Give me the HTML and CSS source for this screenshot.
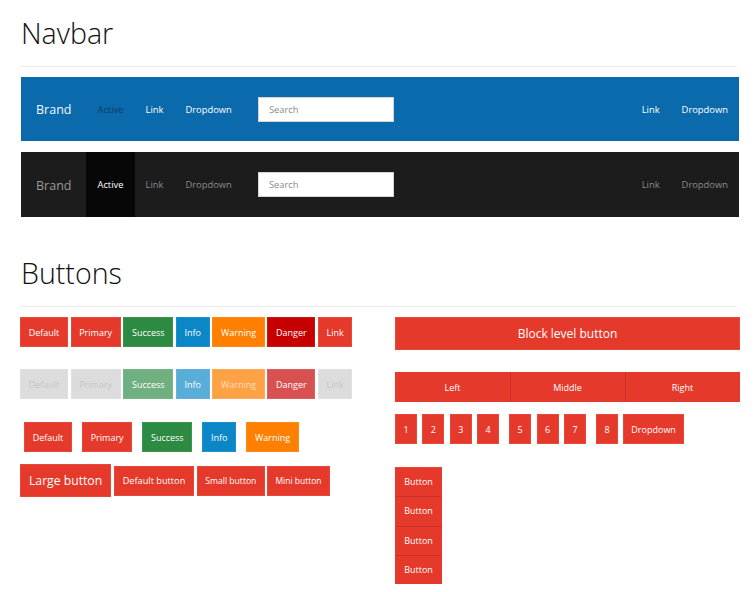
FILE: index.html
```html
<!DOCTYPE html>
<html>
<head>
<meta charset="utf-8">
<link rel="stylesheet" href="styles.css">
</head>
<body>
<div class="page">
  <h1 class="title title-first">Navbar</h1>
  <div class="rule"></div>

  <nav class="navbar navbar-blue">
    <span class="brand">Brand</span>
    <ul class="nav">
      <li class="active">Active</li>
      <li>Link</li>
      <li>Dropdown</li>
    </ul>
    <div class="search"><span>Search</span></div>
    <ul class="nav nav-right">
      <li>Link</li>
      <li>Dropdown</li>
    </ul>
  </nav>

  <nav class="navbar navbar-dark">
    <span class="brand">Brand</span>
    <ul class="nav">
      <li class="active">Active</li>
      <li>Link</li>
      <li>Dropdown</li>
    </ul>
    <div class="search"><span>Search</span></div>
    <ul class="nav nav-right">
      <li>Link</li>
      <li>Dropdown</li>
    </ul>
  </nav>

  <h1 class="title title-second">Buttons</h1>
  <div class="rule"></div>

  <div class="cols">
    <div class="col">
      <div class="row row-tight">
        <span class="btn">Default</span>
        <span class="btn">Primary</span>
        <span class="btn btn-success">Success</span>
        <span class="btn btn-info">Info</span>
        <span class="btn btn-warning">Warning</span>
        <span class="btn btn-danger">Danger</span>
        <span class="btn">Link</span>
      </div>
      <div class="row row-tight row-disabled">
        <span class="btn btn-gray">Default</span>
        <span class="btn btn-gray">Primary</span>
        <span class="btn btn-success is-faded">Success</span>
        <span class="btn btn-info is-faded">Info</span>
        <span class="btn btn-warning is-faded">Warning</span>
        <span class="btn btn-danger is-faded">Danger</span>
        <span class="btn btn-gray">Link</span>
      </div>
      <div class="row row-wide">
        <span class="btn">Default</span>
        <span class="btn">Primary</span>
        <span class="btn btn-success">Success</span>
        <span class="btn btn-info">Info</span>
        <span class="btn btn-warning">Warning</span>
      </div>
      <div class="row row-sizes">
        <span class="btn btn-large">Large button</span>
        <span class="btn btn-default-size">Default button</span>
        <span class="btn btn-small">Small button</span>
        <span class="btn btn-mini">Mini button</span>
      </div>
    </div>

    <div class="col">
      <div class="btn btn-block">Block level button</div>
      <div class="group">
        <span class="btn">Left</span>
        <span class="btn">Middle</span>
        <span class="btn">Right</span>
      </div>
      <div class="toolbar">
        <div class="tgroup">
          <span class="btn btn-num">1</span>
          <span class="btn btn-num">2</span>
          <span class="btn btn-num">3</span>
          <span class="btn btn-num">4</span>
        </div>
        <div class="tgroup">
          <span class="btn btn-num">5</span>
          <span class="btn btn-num">6</span>
          <span class="btn btn-num">7</span>
        </div>
        <div class="tgroup">
          <span class="btn btn-num">8</span>
          <span class="btn btn-drop">Dropdown</span>
        </div>
      </div>
      <div class="vgroup">
        <span class="btn">Button</span>
        <span class="btn">Button</span>
        <span class="btn">Button</span>
        <span class="btn">Button</span>
      </div>
    </div>
  </div>
</div>
</body>
</html>
```

FILE: styles.css
```css
* { box-sizing: border-box; }

html, body {
  margin: 0;
  padding: 0;
  background: #ffffff;
}

body {
  font-family: "Open Sans", "Noto Sans", sans-serif;
  color: #222;
}

.page {
  width: 756px;
  padding: 0 16px 0 20px;
}

.title {
  margin: 0;
  font-size: 28.6px;
  font-weight: 300;
  line-height: 32px;
  color: #111;
  padding-left: 1px;
}

.title-first { padding-top: 17px; }
.title-second { padding-top: 14px; margin-top: 26px; }

.rule {
  height: 1px;
  background: #ececec;
  margin: 17px 3px 0 0;
}

/* Navbar */
.navbar {
  display: flex;
  align-items: center;
  margin-left: 1px;
  margin-top: 10px;
  height: 64px;
  padding-left: 15px;
  width: 718px;
}

.navbar + .navbar { margin-top: 11px; height: 65px; }

.navbar-blue { background: #0a6aab; margin-top: 10px; }
.navbar-dark { background: #1c1c1c; }

.brand {
  font-size: 12.5px;
  padding-right: 15px;
  padding-top: 2px;
  line-height: 62px;
}

.navbar-blue .brand { color: #f4f8fb; }
.navbar-dark .brand { color: #9a9a9a; }

.nav {
  display: flex;
  list-style: none;
  margin: 0;
  padding: 0;
  align-self: stretch;
}

.nav li {
  display: flex;
  align-items: center;
  padding: 0 11px;
  font-size: 9.4px;
}

.navbar-blue .nav li { color: #ffffff; }
.navbar-blue .nav li.active { color: #0b3a5f; }
.navbar-dark .nav li { color: #8a8a8a; }
.navbar-dark .nav li.active { color: #ffffff; background: #070707; }

.search {
  margin-left: 15px;
  width: 136px;
  height: 25px;
  background: #fff;
  border: 1px solid #d6d6d6;
  display: flex;
  align-items: center;
  padding-left: 10px;
  font-size: 9.4px;
  color: #8c8c8c;
}

.nav-right { margin-left: auto; }

/* Columns */
.cols {
  display: grid;
  grid-template-columns: 345px 345px;
  column-gap: 30px;
  margin-top: 10px;
}

.col { display: flex; flex-direction: column; align-items: flex-start; }

/* Buttons */
.btn {
  display: inline-flex;
  align-items: center;
  justify-content: center;
  height: 30px;
  padding: 0 7.7px;
  background: #e53a2b;
  color: #fff;
  font-size: 9px;
  white-space: nowrap;
  border: 1px solid #e8483a;
}

.btn-success { background: #2d8a43; border-color: #3a9350; }
.btn-info { background: #0b87c8; border-color: #1d90cc; }
.btn-warning { background: #ff7f00; border-color: #ff8a17; }
.btn-danger { background: #c60000; border-color: #cc1515; }

.btn-gray { background: #dcdcdc; border-color: #e0e0e0; color: #c6c6c6; }
.is-faded { opacity: 0.68; }
.btn-warning.is-faded { color: #ffd2a4; opacity: 0.72; }

.row { display: flex; align-items: center; }
.row-tight { gap: 2.5px; }
.row-disabled { margin-top: 22px; }
.row-wide { gap: 10px; padding-left: 4px; margin-top: 23px; }
.row-sizes { gap: 2.5px; margin-top: 12px; }

.btn-large { height: 33px; font-size: 12.2px; padding: 0 8px; }
.btn-default-size { padding: 0 8px; font-size: 9.2px; }
.btn-small { padding: 0 7.5px; font-size: 8.6px; }
.btn-mini { padding: 0 7px; font-size: 8.5px; }

.btn-block {
  width: 345px;
  height: 33px;
  font-size: 12px;
  display: flex;
}

.group {
  display: flex;
  width: 345px;
  margin-top: 22px;
}

.group .btn {
  flex: 1;
  height: 30px;
  border-color: #e53a2b;
  border-left: 1px solid #c9302a;
}
.group .btn:first-child { border-left-color: #e53a2b; }

.toolbar {
  display: flex;
  gap: 10px;
  margin-top: 12px;
}

.tgroup { display: flex; gap: 5.4px; }

.btn-num { width: 22px; padding: 0; }
.btn-drop { padding: 0 7px; }

.vgroup {
  display: flex;
  flex-direction: column;
  margin-top: 23px;
}

.vgroup .btn {
  width: 47px;
  height: 29.3px;
  padding: 0;
  border-color: #e53a2b;
  border-top: 1px solid #c9302a;
}
.vgroup .btn:first-child { border-top-color: #e8483a; }
```
